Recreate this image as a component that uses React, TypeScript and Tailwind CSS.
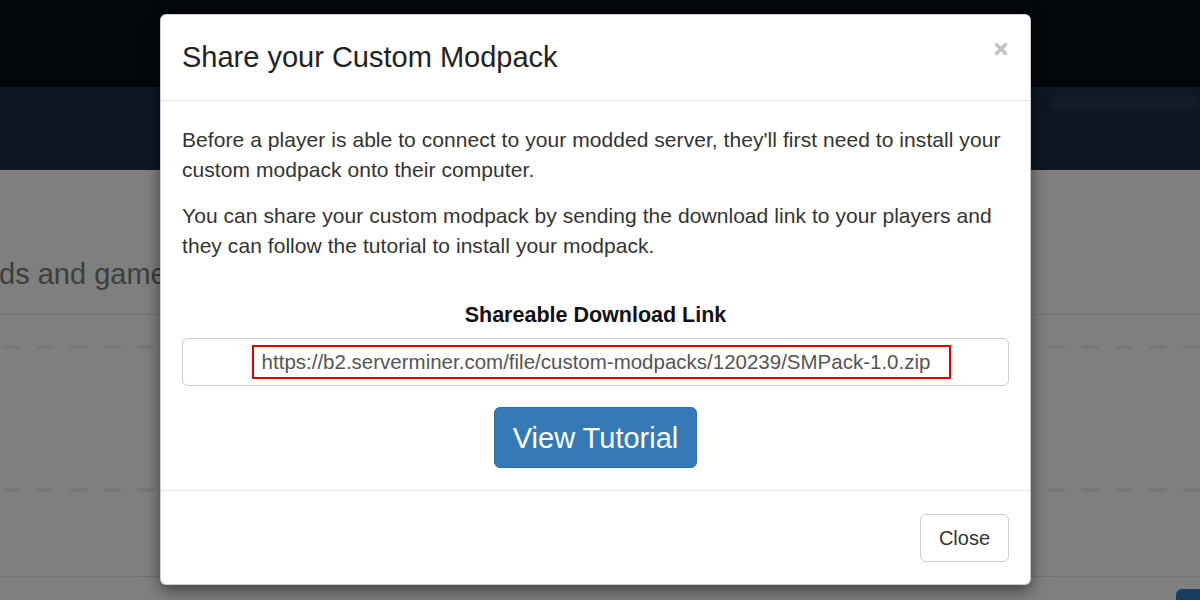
import { X } from 'lucide-react'

const downloadUrl = 'https://b2.serverminer.com/file/custom-modpacks/120239/SMPack-1.0.zip'

// dashed divider used on the dimmed page behind the modal
const DashRow = () => (
  <div className="flex gap-[17px] pl-[3px]">
    {Array.from({ length: 36 }).map((_, i) => (
      <div key={i} className="w-[17px] h-[4px] bg-[#777777]" />
    ))}
  </div>
)

export default function App() {
  return (
    <div
      className="relative w-[1200px] h-[600px] overflow-hidden bg-[#7f7f7f]"
      style={{ fontFamily: '"Liberation Sans", Arial, sans-serif' }}
    >
      {/* Page behind the backdrop (already dimmed) */}
      <div className="h-[87px] bg-[#03060a]" />
      <div className="h-[83px] bg-[#0f1723] flex justify-end items-start pt-[6px] pr-0">
        <div className="w-[150px] h-[14px] mt-[2px] rounded-full bg-[#151d29] blur-[2px]" />
      </div>
      <div className="flex flex-col">
        <div className="h-[144px] flex items-end pb-[25px]">
          <span className="text-[29px] leading-none text-[#3e3e3e] -ml-[1px]">ds and games</span>
        </div>
        <div className="h-px bg-[#727272]" />
        <div className="pt-[30px]">
          <DashRow />
        </div>
        <div className="pt-[139px]">
          <DashRow />
        </div>
        <div className="h-[84px]" />
        <div className="h-px bg-[#727272]" />
        <div className="flex justify-end pt-[12px] pr-0">
          <div className="w-[24px] h-[20px] rounded-tl-md bg-[#1a3d5f]" />
        </div>
      </div>

      {/* Modal */}
      <div className="absolute left-[160px] top-[14px] w-[871px] h-[571px] bg-white rounded-[6px] border border-black/20 shadow-[0_5px_15px_rgba(0,0,0,0.5)] flex flex-col">
        {/* Header */}
        <div className="h-[86px] px-[21px] flex items-center justify-between border-b border-[#e5e5e5]">
          <h4 className="text-[29px] text-[#222] leading-none">Share your Custom Modpack</h4>
          <button className="self-start mt-[25px] -mr-[1px] text-[#c2c2c2]">
            <X className="w-[18px] h-[18px]" strokeWidth={4.5} />
          </button>
        </div>

        {/* Body */}
        <div className="px-[21px] pt-[24px] pb-[22px] border-b border-[#e5e5e5] text-[21px] leading-[30px] tracking-[0.06px] text-[#333]">
          <p className="mb-[16px]">
            Before a player is able to connect to your modded server, they'll first need to install your
            custom modpack onto their computer.
          </p>
          <p>
            You can share your custom modpack by sending the download link to your players and they can
            follow the tutorial to install your modpack.
          </p>

          <div className="mt-[39px] text-center font-bold text-[21.5px] tracking-normal text-[#111]">
            Shareable Download Link
          </div>
          <div className="mt-[8px] h-[48px] rounded-[6px] border border-[#cccccc] flex items-center justify-center">
            <span className="ml-[12px] border-2 border-[#e00000] pl-[8px] pr-[19px] h-[34px] leading-[30px] text-[20.5px] tracking-normal text-[#555]">
              {downloadUrl}
            </span>
          </div>

          <div className="mt-[21px] flex justify-center">
            <button className="w-[203px] h-[61px] rounded-[6px] bg-[#337ab7] border border-[#2e6da4] text-white text-[29px] tracking-normal">
              View Tutorial
            </button>
          </div>
        </div>

        {/* Footer */}
        <div className="flex-1 px-[21px] flex items-center justify-end">
          <button className="w-[89px] h-[48px] rounded-[6px] border border-[#cccccc] text-[#333] text-[20px]">
            Close
          </button>
        </div>
      </div>
    </div>
  )
}
